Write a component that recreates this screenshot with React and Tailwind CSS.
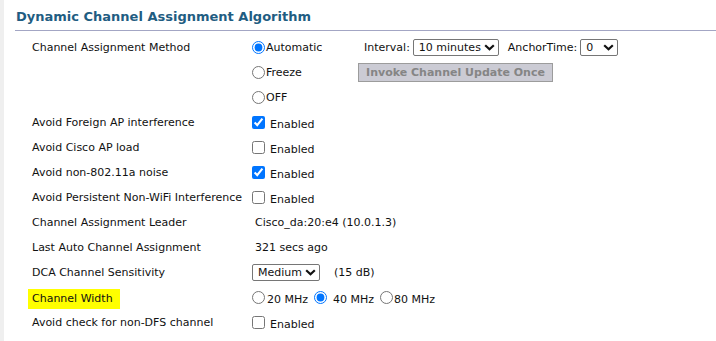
import React from 'react';

function Chevron() {
  return (
    <svg width="11" height="7" viewBox="0 0 11 7" className="shrink-0">
      <path d="M1.2 1.2 L5.5 5.3 L9.8 1.2" fill="none" stroke="#111" strokeWidth="2.2" />
    </svg>
  );
}

function FakeSelect({ value, width }) {
  return (
    <div
      className={`flex items-center justify-between h-[17px] border border-[#767676] rounded-[2px] bg-white pl-[5px] pr-[3px] ${width}`}
    >
      <span className="leading-[13px]">{value}</span>
      <Chevron />
    </div>
  );
}

function Radio({ checked, label }) {
  return (
    <label className="flex items-center">
      <input type="radio" name="dca-method" defaultChecked={checked} className="w-[13px] h-[13px]" />
      <span className="ml-[1px] leading-[13px]">{label}</span>
    </label>
  );
}

function Check({ checked }) {
  return (
    <label className="flex items-center">
      <input type="checkbox" defaultChecked={checked} className="w-[13px] h-[13px]" />
      <span className="ml-[5px] pt-[4px] leading-[13px]">Enabled</span>
    </label>
  );
}

function Row({ label, children }) {
  return (
    <div className="flex items-center h-[25px]">
      <div className="w-[237px] pl-[17px] shrink-0 leading-[13px]">{label}</div>
      <div className="flex items-center">{children}</div>
    </div>
  );
}

export default function App() {
  return (
    <div className="flex min-h-[341px] bg-white text-[11px] text-[#111] font-['DejaVu_Sans','Verdana',sans-serif]">
      <div className="w-[4px] shrink-0 bg-[#efefef]" />
      <div className="flex-1 pl-[11px]">
        <div className="h-[31px] border-b border-[#a3a6c4] pl-[1px] pt-[9px]">
          <h1 className="text-[13px] leading-[16px] font-bold text-[#1f5d82]">
            Dynamic Channel Assignment Algorithm
          </h1>
        </div>

        <div className="mt-[4px]">
          <Row label="Channel Assignment Method">
            <div className="w-[106px]">
              <Radio checked label="Automatic" />
            </div>
            <span className="ml-[6px] leading-[13px]">Interval:</span>
            <div className="ml-[3px]">
              <FakeSelect value="10 minutes" width="w-[86px]" />
            </div>
            <span className="ml-[9px] leading-[13px]">AnchorTime:</span>
            <div className="ml-[3px]">
              <FakeSelect value="0" width="w-[38px]" />
            </div>
          </Row>
          <Row label="">
            <div className="w-[106px]">
              <Radio label="Freeze" />
            </div>
            <button
              disabled
              className="w-[195px] h-[19px] flex items-center justify-center border border-[#9c9c9c] bg-[#cbcbd4] text-[#858585] font-bold text-[11px] leading-[13px]"
            >
              Invoke Channel Update Once
            </button>
          </Row>
          <Row label="">
            <Radio label="OFF" />
          </Row>
          <Row label="Avoid Foreign AP interference">
            <Check checked />
          </Row>
          <Row label="Avoid Cisco AP load">
            <Check />
          </Row>
          <Row label="Avoid non-802.11a noise">
            <Check checked />
          </Row>
          <Row label="Avoid Persistent Non-WiFi Interference">
            <Check />
          </Row>
          <Row label="Channel Assignment Leader">
            <span className="ml-[3px] leading-[13px]">Cisco_da:20:e4 (10.0.1.3)</span>
          </Row>
          <Row label="Last Auto Channel Assignment">
            <span className="ml-[3px] leading-[13px]">321 secs ago</span>
          </Row>
          <Row label="DCA Channel Sensitivity">
            <FakeSelect value="Medium" width="w-[68px]" />
            <span className="ml-[14px] leading-[13px]">(15 dB)</span>
          </Row>
          <div className="flex items-center h-[25px]">
            <div className="w-[237px] pl-[13px] shrink-0">
              <span className="inline-block h-[20px] leading-[20px] pl-[4px] pr-[7px] translate-y-[1px] bg-[#ffff00]">
                Channel Width
              </span>
            </div>
            <div className="flex items-center">
              <input type="radio" name="cw" className="w-[13px] h-[13px]" />
              <span className="ml-[2px] pt-[3px] leading-[13px]">20 MHz</span>
              <input type="radio" name="cw" defaultChecked className="ml-[6px] w-[13px] h-[13px]" />
              <span className="ml-[6px] pt-[3px] leading-[13px]">40 MHz</span>
              <input type="radio" name="cw" className="ml-[6px] w-[13px] h-[13px]" />
              <span className="ml-[1px] pt-[3px] leading-[13px]">80 MHz</span>
            </div>
          </div>
          <Row label="Avoid check for non-DFS channel">
            <Check />
          </Row>
        </div>
      </div>
    </div>
  );
}
